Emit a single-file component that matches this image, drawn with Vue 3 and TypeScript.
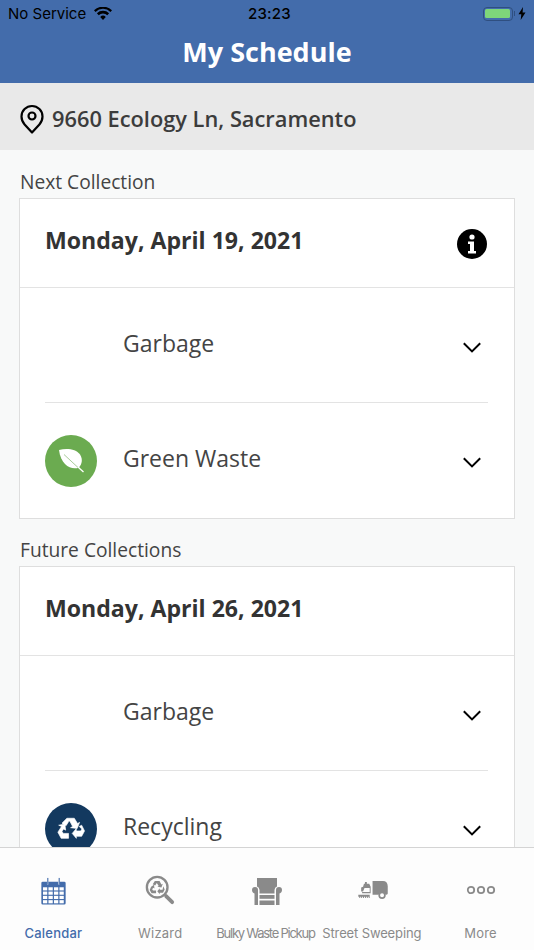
<script setup lang="ts">
interface Item { name: string; icon?: 'leaf' | 'recycle' }
interface Group { label: string; date: string; info?: boolean; items: Item[] }
const groups: Group[] = [
  { label: 'Next Collection', date: 'Monday, April 19, 2021', info: true, items: [{ name: 'Garbage' }, { name: 'Green Waste', icon: 'leaf' }] },
  { label: 'Future Collections', date: 'Monday, April 26, 2021', items: [{ name: 'Garbage' }, { name: 'Recycling', icon: 'recycle' }] },
]
const tabs = [
  { key: 'calendar', label: 'Calendar' },
  { key: 'wizard', label: 'Wizard' },
  { key: 'bulky', label: 'Bulky Waste Pickup' },
  { key: 'street', label: 'Street Sweeping' },
  { key: 'more', label: 'More' },
]
</script>

<template>
  <div class="app">
    <header class="header">
      <div class="status">
        <div class="status-left">
          <span>No Service</span>
          <svg class="wifi" viewBox="0 0 18 13" width="18" height="13">
            <path fill="#000" d="M9 13 6.2 9.9a4 4 0 0 1 5.6 0zM4.7 8.2 2.9 6.3a8.7 8.7 0 0 1 12.2 0l-1.8 1.9a6.1 6.1 0 0 0-8.6 0zM1.5 4.9 0 3.3a12.9 12.9 0 0 1 18 0l-1.500 1.600a10.700 10.700 0 0 0-15 0z" />
          </svg>
        </div>
        <span class="time">23:23</span>
        <div class="status-right">
          <span class="battery"><span class="battery-fill"></span></span>
          <span class="battery-cap"></span>
          <svg viewBox="0 0 8 13" width="8" height="13"><path fill="#000" d="M5 0 .5 7.300h2.800L2.700 13l4.800-7.500H4.600z" /></svg>
        </div>
      </div>
      <h1 class="title">My Schedule</h1>
    </header>

    <div class="address">
      <svg viewBox="0 0 24 30" width="24" height="30" class="pin">
        <path fill="none" stroke="#000" stroke-width="2.200" stroke-linejoin="round" d="M12 28.500 4.600 20.400C2.600 18.200 1.500 15.600 1.500 12.500a10.500 10.500 0 0 1 21 0c0 3.100-1.100 5.700-3.100 7.900z" />
        <circle cx="12" cy="12" r="3.500" fill="none" stroke="#000" stroke-width="2.200" />
      </svg>
      <span class="address-text">9660 Ecology Ln, Sacramento</span>
    </div>

    <main class="content">
      <section v-for="g in groups" :key="g.label" class="group">
        <h2 class="group-label">{{ g.label }}</h2>
        <div class="card">
          <div class="date-row">
            <span class="date">{{ g.date }}</span>
            <svg v-if="g.info" class="info" viewBox="0 0 30 30" width="30" height="30">
              <circle cx="15" cy="15" r="15" fill="#000" />
              <circle cx="15" cy="8" r="2.600" fill="#fff" />
              <path fill="#fff" d="M11 12.500h6v9.500h2v2.500h-8V22h2v-7h-2z" />
            </svg>
          </div>
          <div class="items">
            <div v-for="item in g.items" :key="item.name" class="item">
              <span class="badge" :class="item.icon ? 'badge-' + item.icon : ''">
                <svg v-if="item.icon === 'leaf'" viewBox="0 0 52 52" width="52" height="52">
                  <path fill="#fff" d="M14 15C22 13 31 14 35 19.500C38 24 37 29 34 32.500C27 35.500 16 31 14 15z" />
                  <path fill="none" stroke="#a9cc9a" stroke-width="1" d="M19 19.500 33 32.500" />
                  <path fill="none" stroke="#fff" stroke-width="1.300" d="M33 32 38.500 37" />
                </svg>
                <svg v-else-if="item.icon === 'recycle'" viewBox="0 0 52 52" width="52" height="52">
                  <g fill="#fff" stroke="#fff" stroke-width=".8" stroke-linejoin="round" transform="translate(26 25.500) scale(.82) translate(-26 -26)">
                    <path d="M21 13.500h9l4 6.500 2.500-1.500-3 7.500-8-1 2.500-1.500-3.500-6.500h-1l-3.500 5.500-5-3z" />
                    <path d="M39 22l3.500 7-3.500 6.500h-6.500V38l-5-6 5-6v3h5.500l1.200-2.300L36 23.500z" />
                    <path d="M14.500 23.500l-4.500 7 4 7.500h9v-6h-6.500l-1.500-2.500 2-3 2.500 1.500-1-7.500-7.500 1.500z" />
                  </g>
                </svg>
              </span>
              <span class="item-name">{{ item.name }}</span>
              <svg class="chev" viewBox="0 0 18 11" width="18" height="11">
                <path fill="none" stroke="#000" stroke-width="2" d="M.8 1.200 9 9.400l8.200-8.200" />
              </svg>
            </div>
          </div>
        </div>
      </section>
    </main>

    <nav class="tabs">
      <div v-for="t in tabs" :key="t.key" class="tab" :class="['tab-' + t.key, { active: t.key === 'calendar' }]">
        <div class="tab-icon">
          <svg v-if="t.key === 'calendar'" viewBox="0 0 26 30" width="25" height="28" class="cal-icon">
            <path fill="#436cab" d="M1.500 5H6V8h1.500V5h10.500V8h1.500V5H24.500A1.500 1.500 0 0 1 26 6.500V28a1.500 1.500 0 0 1-1.500 1.500H1.500A1.500 1.500 0 0 1 0 28V6.500A1.500 1.500 0 0 1 1.500 5z" />
            <rect x="6.300" y="1" width="1.200" height="7" fill="#436cab" />
            <rect x="18.500" y="1" width="1.200" height="7" fill="#436cab" />
            <g fill="#fff">
              <rect v-for="c in 16" :key="c" :x="1.700 + ((c - 1) % 4) * 5.900" :y="11 + Math.floor((c - 1) / 4) * 4.600" width="4.600" height="3.400" />
            </g>
          </svg>
          <svg v-else-if="t.key === 'wizard'" viewBox="0 0 32 32" width="30" height="30" class="wiz-icon">
            <circle cx="13" cy="13" r="11" fill="none" stroke="#8a8a8a" stroke-width="2.500" />
            <path stroke="#8a8a8a" stroke-width="4" stroke-linecap="round" d="M22.500 22.500 29 29" />
            <g fill="#8a8a8a">
              <path d="M10.500 6.500h5l2 3.500 1.500-.8-1.500 4-4.300-.6 1.400-.8-2-3.300-1.800 2.800-2.600-1.500z" />
              <path d="M19.500 12l1.500 3.500-1.800 3.500h-3.500v1.500l-2.600-3.200 2.600-3.200v1.600h3z" />
              <path d="M6.500 12.500 5 16l2 3.500h4.800v-3H8.500l-.8-1.400 1.100-1.600 1.300.8-.5-3.800z" />
            </g>
          </svg>
          <svg v-else-if="t.key === 'bulky'" viewBox="0 0 30 27" width="30" height="27">
            <g fill="#8a8a8a">
              <path d="M5 0h20v8.500a4 4 0 0 0-2.500 3.500v3.500h-15V12A4 4 0 0 0 5 8.500z" />
              <path d="M0 12a3 3 0 0 1 6 0v15H2.500V15.500C1 15 0 13.800 0 12z" />
              <path d="M30 12a3 3 0 0 0-6 0v15h3.500V15.500C29 15 30 13.800 30 12z" />
              <rect x="7.500" y="17" width="15" height="3.800" />
              <rect x="7.500" y="22.500" width="15" height="4.500" />
            </g>
          </svg>
          <svg v-else-if="t.key === 'street'" viewBox="0 0 32 20" width="31" height="19" class="street-icon">
            <path fill="#8a8a8a" d="M15 1h11c3 0 5 2 5 5.500V14c0 1-.5 1.500-1.500 1.500h-.8a4 4 0 0 0-7.400 0H15z" />
            <path fill="#8a8a8a" d="M5 7l1-3h1V2h2v2h2.500l1.500 3v7H4V12.500h8V8.500H6.500L5 12H3V8z" />
            <circle cx="25" cy="16" r="3" fill="none" stroke="#8a8a8a" stroke-width="1.800" />
            <path fill="#8a8a8a" d="M0 15.500h12V19h-1v-1.500h-1V19H9v-1.500H8V19H7v-1.500H6V19H5v-1.500H4V19H3v-1.500H2V19H1v-1.500H0z" />
          </svg>
          <svg v-else viewBox="0 0 30 10" width="30" height="10" class="more-icon">
            <g fill="none" stroke="#8a8a8a" stroke-width="1.800">
              <circle cx="5" cy="5" r="3.200" />
              <circle cx="15" cy="5" r="3.200" />
              <circle cx="25" cy="5" r="3.200" />
            </g>
          </svg>
        </div>
        <span class="tab-label">{{ t.label }}</span>
      </div>
    </nav>
  </div>
</template>

<style scoped>
.app {
  width: 534px;
  height: 950px;
  display: flex;
  flex-direction: column;
  overflow: hidden;
  background: #f8f9f9;
  font-family: "Open Sans", sans-serif;
  color: #3a3a3a;
}
.header {
  height: 83px;
  flex: none;
  background: #436cab;
}
.status {
  height: 27px;
  display: flex;
  align-items: center;
  justify-content: space-between;
  position: relative;
  padding: 0 8px;
  font-family: Inter, "Liberation Sans", sans-serif;
  font-size: 15px;
  color: #000;
}
.status-left {
  display: flex;
  align-items: center;
  gap: 8px;
}
.time {
  position: absolute;
  left: 248px;
  font-weight: 500;
  letter-spacing: 0.2px;
}
.status-right {
  display: flex;
  align-items: center;
}
.battery {
  width: 30px;
  height: 14px;
  box-sizing: border-box;
  border: 1.500px solid #2f4f80;
  border-radius: 4px;
  padding: 1.500px;
  display: flex;
}
.battery-fill {
  flex: 1;
  background: #7ed67a;
  border-radius: 1.500px;
}
.battery-cap {
  width: 1.500px;
  height: 5px;
  margin: 0 3px 0 1px;
  background: #2f4f80;
}
.title {
  margin: 0;
  text-align: center;
  font-size: 27px;
  line-height: 50px;
  font-weight: 700;
  color: #fff;
}
.address {
  height: 67px;
  flex: none;
  box-sizing: border-box;
  background: #e9e9e9;
  display: flex;
  align-items: center;
  gap: 8px;
  padding-left: 20px;
  font-size: 21.800px;
  font-weight: 600;
  color: #3c3c3c;
}
.address-text {
  padding-top: 4px;
}
.pin {
  margin-top: 5px;
}
.content {
  flex: 1;
  min-height: 0;
  overflow: hidden;
  padding: 17px 19px 0;
  position: relative;
}
.group {
  margin-bottom: 16px;
}
.group-label {
  margin: 0 0 1px 1px;
  font-size: 19.200px;
  line-height: 30px;
  font-weight: 400;
  color: #444;
}
.card {
  background: #fff;
  border: 1px solid #dedede;
  width: 496px;
  box-sizing: border-box;
}
.date-row {
  height: 89px;
  box-sizing: border-box;
  border-bottom: 1px solid #e3e3e3;
  display: flex;
  align-items: center;
  justify-content: space-between;
  padding: 0 27px 6px 25px;
  font-size: 23.100px;
  font-weight: 700;
  color: #333;
}
.info {
  margin-top: 8px;
}
.items {
  padding: 0 26px 0 25px;
}
.item {
  height: 114px;
  display: flex;
  align-items: center;
  position: relative;
}
.item + .item {
  height: 115px;
  border-top: 1px solid #e3e3e3;
}
.badge {
  width: 52px;
  height: 52px;
  border-radius: 50%;
  flex: none;
  margin-top: 0;
  margin-right: 26px;
  display: flex;
}
.badge-leaf {
  background: #6bab50;
}
.badge-recycle {
  background: #13395f;
}
.item-name {
  flex: 1;
  font-size: 23px;
  color: #444;
  margin-top: -5px;
}
.chev {
  margin-right: 7px;
  margin-top: 4px;
}
.tabs {
  height: 103px;
  flex: none;
  box-sizing: border-box;
  background: #fdfdfd;
  border-top: 1px solid #d4d4d4;
  display: grid;
  grid-template-columns: repeat(5, 1fr);
  position: relative;
}
.tab {
  display: flex;
  flex-direction: column;
  align-items: center;
  white-space: nowrap;
}
.tab-icon {
  height: 76px;
  display: flex;
  align-items: center;
  justify-content: center;
  padding-top: 10px;
  box-sizing: border-box;
}
.cal-icon {
  margin-top: -1px;
}
.wiz-icon {
  margin-top: -2px;
}
.street-icon {
  margin-top: -4px;
}
.more-icon {
  margin-top: -2px;
}
.tab-label {
  font-family: Inter, "Liberation Sans", sans-serif;
  font-size: 13px;
  line-height: 18px;
  color: #8a8a8a;
  letter-spacing: 0.2px;
}
.tab.active .tab-label {
  color: #436cab;
  font-weight: 500;
}
.tab-bulky .tab-label {
  letter-spacing: -1.25px;
  margin-right: 3px;
}
.tab-street .tab-label {
  letter-spacing: -0.13px;
  margin-right: 4px;
}
</style>
